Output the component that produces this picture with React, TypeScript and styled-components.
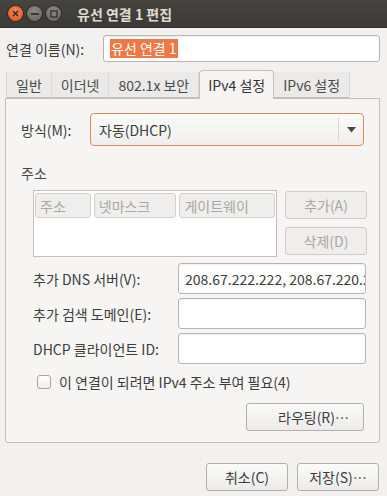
import React from "react";
import styled, { createGlobalStyle } from "styled-components";

const GlobalStyle = createGlobalStyle`
  html, body {
    margin: 0;
    padding: 0;
    background: #f2f1f0;
  }
  body {
    font-family: "Noto Sans CJK KR", "Noto Sans", "DejaVu Sans", sans-serif;
    font-size: 14px;
    color: #3c3c3c;
  }
`;

const Window = styled.div`
  width: 387px;
  height: 496px;
  display: flex;
  flex-direction: column;
  background: #f2f1f0;
  overflow: hidden;
`;

const TitleBar = styled.div`
  height: 28px;
  flex: none;
  display: flex;
  align-items: center;
  padding-left: 8px;
  background: linear-gradient(#45443f, #3b3a36);
  border-bottom: 1px solid #2e2d2a;
  box-sizing: border-box;
`;

const WinButtons = styled.div`
  display: flex;
  gap: 4px;
  margin-right: 16px;
`;

const WinButton = styled.div<{ $close?: boolean }>`
  width: 15px;
  height: 15px;
  border-radius: 50%;
  display: flex;
  align-items: center;
  justify-content: center;
  background: ${(p) =>
    p.$close
      ? "radial-gradient(circle at 50% 35%, #f5885a, #de4b17)"
      : "radial-gradient(circle at 50% 35%, #8a8882, #64625d)"};
  box-shadow: 0 0 0 1px #2d2c29;
`;

const Title = styled.div`
  color: #dfdbd2;
  font-weight: bold;
  font-size: 14px;
`;

const Body = styled.div`
  flex: 1;
  display: flex;
  flex-direction: column;
  padding: 7px 7px 0 5px;
`;

const NameRow = styled.div`
  display: flex;
  align-items: center;
  padding-left: 1px;
`;

const NameLabel = styled.div`
  width: 97px;
  flex: none;
`;

const Entry = styled.div<{ $width?: number; $height?: number }>`
  box-sizing: border-box;
  height: ${(p) => p.$height ?? 27}px;
  ${(p) => (p.$width ? `width: ${p.$width}px;` : "flex: 1;")}
  background: #ffffff;
  border: 1px solid #b8b5b0;
  border-radius: 3px;
  box-shadow: inset 0 1px 1px rgba(0, 0, 0, 0.06);
  display: flex;
  align-items: center;
  padding-left: 6px;
  overflow: hidden;
  white-space: nowrap;
`;

const Selected = styled.span`
  background: #f07746;
  color: #ffffff;
  line-height: 19px;
  padding: 0 1px;
`;

const Tabs = styled.div`
  display: flex;
  align-items: flex-end;
  margin-top: 8px;
  margin-left: 1px;
  height: 28px;
  position: relative;
  z-index: 1;
`;

const Tab = styled.div<{ $active?: boolean }>`
  box-sizing: border-box;
  height: 26px;
  padding: 0 9px;
  display: flex;
  align-items: center;
  border-right: 1px solid #dcdad6;
  border-bottom: 1px solid #c4c1bb;
  background: #ebeae8;
  color: #4a4a4a;
  &:first-child {
    border-left: 1px solid #dcdad6;
  }
  ${(p) =>
    p.$active &&
    `
    padding: 0 8px;
    background: #f6f5f4;
    color: #333;
    border: 1px solid #c4c1bb;
    border-bottom: none;
    border-radius: 4px 4px 0 0;
    margin-bottom: -1px;
    height: 29px;
  `}
`;

const Panel = styled.div`
  box-sizing: border-box;
  height: 345px;
  background: #f6f5f4;
  border: 1px solid #c4c1bb;
  border-radius: 0 0 3px 3px;
  padding: 14px 15px 0 14px;
  display: flex;
  flex-direction: column;
`;

const MethodRow = styled.div`
  display: flex;
  align-items: center;
`;

const MethodLabel = styled.div`
  width: 69px;
  padding-left: 1px;
`;

const Combo = styled.div`
  flex: 1;
  box-sizing: border-box;
  height: 33px;
  border: 1px solid #e2875f;
  border-radius: 4px;
  background: linear-gradient(#fbfbfa, #efeeec);
  display: flex;
  align-items: center;
  padding-left: 8px;
`;

const ComboText = styled.div`
  flex: 1;
`;

const ComboSep = styled.div`
  width: 1px;
  height: 23px;
  background: #d8d5d0;
`;

const ComboArrow = styled.div`
  width: 24px;
  display: flex;
  justify-content: center;
`;

const SectionTitle = styled.div`
  margin-top: 17px;
  padding-left: 1px;
  color: #4a4a4a;
`;

const AddrRow = styled.div`
  display: flex;
  margin-top: 7px;
  margin-left: 13px;
  gap: 8px;
`;

const List = styled.div`
  box-sizing: border-box;
  width: 244px;
  height: 67px;
  background: #ffffff;
  border: 1px solid #c4c1bb;
  padding: 2px 1px;
`;

const ListHeader = styled.div`
  display: flex;
  gap: 3px;
`;

const HeaderCell = styled.div<{ $width: number }>`
  box-sizing: border-box;
  width: ${(p) => p.$width}px;
  height: 25px;
  border: 1px solid #d4d1cc;
  border-radius: 3px;
  background: #efeeec;
  color: #a9a7a3;
  display: flex;
  align-items: center;
  padding-left: 4px;
`;

const SideButtons = styled.div`
  display: flex;
  flex-direction: column;
  gap: 8px;
  padding-top: 1px;
`;

const Button = styled.div<{ $width: number; $disabled?: boolean; $right?: boolean }>`
  box-sizing: border-box;
  width: ${(p) => p.$width}px;
  height: 28px;
  border: 1px solid ${(p) => (p.$disabled ? "#cfccc7" : "#b3b0aa")};
  border-radius: 3px;
  background: ${(p) =>
    p.$disabled ? "#efeeec" : "linear-gradient(#fbfbfa, #ecebe9)"};
  color: ${(p) => (p.$disabled ? "#a9a7a3" : "#3c3c3c")};
  display: flex;
  align-items: center;
  justify-content: ${(p) => (p.$right ? "flex-end" : "center")};
  padding-right: ${(p) => (p.$right ? 14 : 0)}px;
`;

const Fields = styled.div`
  display: grid;
  grid-template-columns: 145px 188px;
  row-gap: 4px;
  margin-top: 6px;
  margin-left: 13px;
  align-items: center;
`;

const FieldLabel = styled.div`
  white-space: nowrap;
`;

const CheckRow = styled.div`
  display: flex;
  align-items: center;
  gap: 8px;
  margin-top: 6px;
  margin-left: 17px;
  height: 24px;
`;

const CheckBox = styled.div`
  box-sizing: border-box;
  width: 14px;
  height: 14px;
  border: 1px solid #a7a49f;
  border-radius: 3px;
  background: linear-gradient(#ffffff, #efeeec);
`;

const RouteRow = styled.div`
  display: flex;
  justify-content: flex-end;
  margin-top: 9px;
`;

const Footer = styled.div`
  display: flex;
  justify-content: flex-end;
  gap: 9px;
  margin-top: 20px;
  padding-right: 1px;
`;

const App = () => {
  return (
    <Window>
      <GlobalStyle />
      <TitleBar>
        <WinButtons>
          <WinButton $close>
            <svg width="7" height="7" viewBox="0 0 7 7">
              <path d="M1 1L6 6M6 1L1 6" stroke="#3b2a22" strokeWidth="1.6" />
            </svg>
          </WinButton>
          <WinButton>
            <svg width="8" height="2" viewBox="0 0 8 2">
              <rect width="8" height="2" fill="#3a3935" />
            </svg>
          </WinButton>
          <WinButton>
            <svg width="8" height="8" viewBox="0 0 8 8">
              <rect x="1" y="1" width="6" height="6" fill="none" stroke="#3a3935" strokeWidth="1.5" />
            </svg>
          </WinButton>
        </WinButtons>
        <Title>유선 연결 1 편집</Title>
      </TitleBar>
      <Body>
        <NameRow>
          <NameLabel>연결 이름(N):</NameLabel>
          <Entry>
            <Selected>유선 연결 1</Selected>
          </Entry>
        </NameRow>
        <Tabs>
          <Tab>일반</Tab>
          <Tab>이더넷</Tab>
          <Tab>802.1x 보안</Tab>
          <Tab $active>IPv4 설정</Tab>
          <Tab>IPv6 설정</Tab>
        </Tabs>
        <Panel>
          <MethodRow>
            <MethodLabel>방식(M):</MethodLabel>
            <Combo>
              <ComboText>자동(DHCP)</ComboText>
              <ComboSep />
              <ComboArrow>
                <svg width="9" height="6" viewBox="0 0 9 6">
                  <path d="M0 0H9L4.5 5.5Z" fill="#4a4a4a" />
                </svg>
              </ComboArrow>
            </Combo>
          </MethodRow>
          <SectionTitle>주소</SectionTitle>
          <AddrRow>
            <List>
              <ListHeader>
                <HeaderCell $width={56}>주소</HeaderCell>
                <HeaderCell $width={83}>넷마스크</HeaderCell>
                <HeaderCell $width={96}>게이트웨이</HeaderCell>
              </ListHeader>
            </List>
            <SideButtons>
              <Button $width={82} $disabled>추가(A)</Button>
              <Button $width={82} $disabled>삭제(D)</Button>
            </SideButtons>
          </AddrRow>
          <Fields>
            <FieldLabel>추가 DNS 서버(V):</FieldLabel>
            <Entry $width={188} $height={31}>208.67.222.222, 208.67.220.220</Entry>
            <FieldLabel>추가 검색 도메인(E):</FieldLabel>
            <Entry $width={188} $height={31} />
            <FieldLabel>DHCP 클라이언트 ID:</FieldLabel>
            <Entry $width={188} $height={31} />
          </Fields>
          <CheckRow>
            <CheckBox />
            <span>이 연결이 되려면 IPv4 주소 부여 필요(4)</span>
          </CheckRow>
          <RouteRow>
            <Button $width={118} $right>라우팅(R)…</Button>
          </RouteRow>
        </Panel>
        <Footer>
          <Button $width={82}>취소(C)</Button>
          <Button $width={82}>저장(S)…</Button>
        </Footer>
      </Body>
    </Window>
  );
};

export default App;
